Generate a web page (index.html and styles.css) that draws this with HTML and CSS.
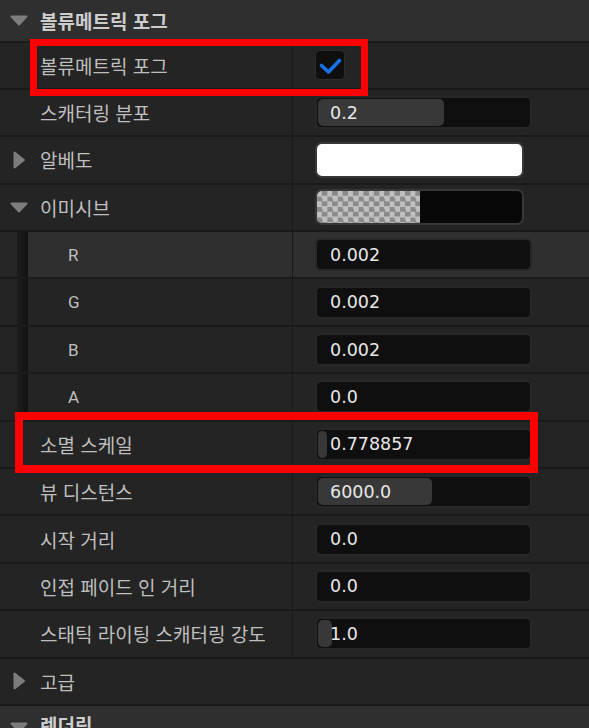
FILE: index.html
```html
<!DOCTYPE html>
<html lang="ko">
<head>
    <meta charset="UTF-8">
    <meta name="viewport" content="width=device-width, initial-scale=1.0">
    <title>볼류메트릭 포그</title>
    <link rel="stylesheet" href="styles.css">
</head>
<body>

    <div class="panel">
        <div class="cat">
            <svg class="arrow-down" width="18" height="11" viewBox="0 0 18 11"><polygon points="1.5,1.5 16.5,1.5 9,9.5" /></svg>
            <span>볼류메트릭 포그</span>
        </div>

        <div class="row marked">
            <div class="name">볼류메트릭 포그</div>
            <div class="value">
                <span class="check">
                    <svg width="30" height="30" viewBox="0 0 30 30"><polyline points="6.5,15.5 13.5,22 24.5,10.5" /></svg>
                </span>
            </div>
            <div class="mark mark-fog"></div>
        </div>

        <div class="row">
            <div class="name">스캐터링 분포</div>
            <div class="value">
                <div class="num slider"><span class="fill" style="width: 126px"></span><span class="txt">0.2</span></div>
            </div>
        </div>

        <div class="row">
            <div class="name group">
                <svg class="arrow-right" width="13" height="18" viewBox="0 0 13 18"><polygon points="1.5,1.5 11,9 1.5,16.5" /></svg>
                <span>알베도</span>
            </div>
            <div class="value">
                <div class="swatch white"></div>
            </div>
        </div>

        <div class="row">
            <div class="name group">
                <svg class="arrow-down" width="18" height="11" viewBox="0 0 18 11"><polygon points="1.5,1.5 16.5,1.5 9,9.5" /></svg>
                <span>이미시브</span>
            </div>
            <div class="value">
                <div class="swatch emissive"><span class="alpha"></span><span class="rgb"></span></div>
            </div>
        </div>

        <div class="row sub hover">
            <div class="name">R</div>
            <div class="value"><div class="num"><span class="txt">0.002</span></div></div>
        </div>

        <div class="row sub">
            <div class="name">G</div>
            <div class="value"><div class="num"><span class="txt">0.002</span></div></div>
        </div>

        <div class="row sub">
            <div class="name">B</div>
            <div class="value"><div class="num"><span class="txt">0.002</span></div></div>
        </div>

        <div class="row sub">
            <div class="name">A</div>
            <div class="value"><div class="num"><span class="txt">0.0</span></div></div>
        </div>

        <div class="row marked">
            <div class="name">소멸 스케일</div>
            <div class="value">
                <div class="num slider"><span class="fill" style="width: 9px"></span><span class="txt">0.778857</span></div>
            </div>
            <div class="mark mark-extinction"></div>
        </div>

        <div class="row">
            <div class="name">뷰 디스턴스</div>
            <div class="value">
                <div class="num slider"><span class="fill" style="width: 114px"></span><span class="txt">6000.0</span></div>
            </div>
        </div>

        <div class="row">
            <div class="name">시작 거리</div>
            <div class="value"><div class="num"><span class="txt">0.0</span></div></div>
        </div>

        <div class="row">
            <div class="name">인접 페이드 인 거리</div>
            <div class="value"><div class="num"><span class="txt">0.0</span></div></div>
        </div>

        <div class="row">
            <div class="name">스태틱 라이팅 스캐터링 강도</div>
            <div class="value">
                <div class="num slider"><span class="fill" style="width: 14px"></span><span class="txt">1.0</span></div>
            </div>
        </div>

        <div class="row solo">
            <div class="name group">
                <svg class="arrow-right" width="13" height="18" viewBox="0 0 13 18"><polygon points="1.5,1.5 11,9 1.5,16.5" /></svg>
                <span>고급</span>
            </div>
        </div>

        <div class="cat bottom">
            <svg class="arrow-down" width="18" height="11" viewBox="0 0 18 11"><polygon points="1.5,1.5 16.5,1.5 9,9.5" /></svg>
            <span>렌더링</span>
        </div>
    </div>

</body>
</html>
```

FILE: styles.css
```css
body {
    margin: 0;
    background-color: #242424;
    font-family: "Noto Sans CJK KR", "Noto Sans", sans-serif;
    color: #bfbfbf;
    overflow: hidden;
}

.panel {
    width: 589px;
}

/* category header */
.cat {
    height: 40.5px;
    box-sizing: border-box;
    background-color: #2f2f2f;
    display: flex;
    align-items: center;
    padding-left: 10px;
    font-size: 19px;
    font-weight: bold;
    color: #cdcdcd;
}

.cat span {
    margin-left: 12px;
}

.cat.bottom {
    border-top: 2px solid #1a1a1a;
    height: 47.4px;
    align-items: flex-start;
    padding-top: 5px;
}

.cat.bottom .arrow-down {
    margin-top: 11px;
}

.arrow-down polygon,
.arrow-right polygon {
    fill: #7d7d7d;
    stroke: #7d7d7d;
    stroke-width: 2;
    stroke-linejoin: round;
}

/* property rows */
.row {
    height: 47.4px;
    box-sizing: border-box;
    border-top: 2px solid #1a1a1a;
    background-color: #242424;
    display: grid;
    grid-template-columns: 293px 1fr;
}

.row.marked {
    position: relative;
}

.name {
    display: flex;
    align-items: center;
    padding-left: 40px;
    border-right: 1px solid #1a1a1a;
    font-size: 19px;
    white-space: nowrap;
}

.name.group {
    padding-left: 10px;
}

.name.group .arrow-right {
    margin-left: 3px;
    margin-right: 14px;
}

.name.group .arrow-down {
    margin-right: 12px;
}

.row.solo {
    grid-template-columns: 1fr;
}

.row.solo .name {
    border-right: none;
}

.row.sub .name {
    padding-left: 68px;
    font-family: Roboto, "Noto Sans CJK KR", sans-serif;
    font-size: 17px;
    background: linear-gradient(to right, #242424 0 17px, #1d1d1d 17px, #121212 28px, transparent 28px);
}

.row.hover {
    background-color: #2f2f2f;
}

.row.hover .name {
    background: linear-gradient(to right, #262626 0 17px, #1d1d1d 17px, #121212 28px, transparent 28px);
}

.value {
    display: flex;
    align-items: center;
    padding-left: 22px;
}

/* widgets */
.check {
    width: 30px;
    height: 30px;
    box-sizing: border-box;
    border: 1px solid #2c2c2c;
    border-radius: 5px;
    background-color: #0f0f0f;
    display: flex;
}

.check svg {
    margin: -1px;
}

.check polyline {
    fill: none;
    stroke: #1573e6;
    stroke-width: 3.6;
    stroke-linecap: round;
    stroke-linejoin: round;
}

.num {
    position: relative;
    width: 217px;
    height: 33px;
    box-sizing: border-box;
    border: 2px solid #272727;
    border-radius: 6px;
    background-color: #0f0f0f;
    display: flex;
    align-items: center;
    padding-left: 13px;
    font-family: "DejaVu Sans", sans-serif;
    font-size: 17.5px;
    color: #e8e8e8;
}

.num .fill {
    position: absolute;
    left: 1px;
    top: 1px;
    bottom: 1px;
    border-radius: 5px;
    background-color: #383838;
}

.num .txt {
    position: relative;
}

.swatch {
    width: 209px;
    height: 36px;
    box-sizing: border-box;
    border: 2px solid #383838;
    border-radius: 7px;
    overflow: hidden;
    display: flex;
}

.swatch.white {
    background-color: #ffffff;
}

.swatch .alpha {
    width: 103px;
    background-color: #c0c0c0;
    background-image: conic-gradient(#8a8a8a 25%, transparent 0 50%, #8a8a8a 0 75%, transparent 0);
    background-size: 10.4px 10.4px;
}

.swatch .rgb {
    flex: 1;
    background-color: #080808;
}

/* red highlight boxes */
.mark {
    position: absolute;
    z-index: 10;
    box-sizing: border-box;
    border-style: solid;
    border-color: #ff0000;
}

.mark-fog {
    left: 30px;
    top: -3.5px;
    width: 338px;
    height: 57px;
    border-width: 7px;
}

.mark-extinction {
    left: 15px;
    top: -9.7px;
    width: 523px;
    height: 61px;
    border-width: 8px;
}
```
